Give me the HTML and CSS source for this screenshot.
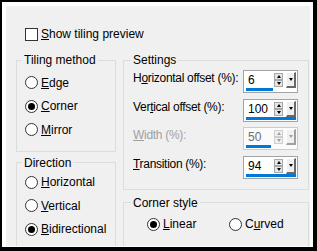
FILE: index.html
```html
<!DOCTYPE html>
<html>
<head>
<meta charset="utf-8">
<link rel="stylesheet" href="styles.css">
</head>
<body>
<div class="frame">
  <div class="dialog">
    <div class="check"><span class="cb"></span><span><u>S</u>how tiling preview</span></div>
    <div class="cols">
      <div class="col left">
        <fieldset class="grp tiling">
          <legend>Tiling method</legend>
          <div class="opts">
            <div class="radio"><span class="rb"></span><span><u>E</u>dge</span></div>
            <div class="radio"><span class="rb on"></span><span><u>C</u>orner</span></div>
            <div class="radio"><span class="rb"></span><span><u>M</u>irror</span></div>
          </div>
        </fieldset>
        <fieldset class="grp direction">
          <legend>Direction</legend>
          <div class="opts">
            <div class="radio"><span class="rb"></span><span><u>H</u>orizontal</span></div>
            <div class="radio"><span class="rb"></span><span><u>V</u>ertical</span></div>
            <div class="radio"><span class="rb on"></span><span><u>B</u>idirectional</span></div>
          </div>
        </fieldset>
      </div>
      <div class="col right">
        <fieldset class="grp settings">
          <legend>Settings</legend>
          <div class="fields">
            <div class="field">
              <span class="lbl">H<u>o</u>rizontal offset (%):</span>
              <div class="num">
                <div class="top"><span class="val">6</span><span class="spin"><span class="sb up"></span><span class="sb dn"></span></span><span class="dd"></span></div>
                <div class="track"><div class="fill" style="width:54%"></div></div>
              </div>
            </div>
            <div class="field">
              <span class="lbl">Ver<u>t</u>ical offset (%):</span>
              <div class="num">
                <div class="top"><span class="val">100</span><span class="spin"><span class="sb up"></span><span class="sb dn"></span></span><span class="dd"></span></div>
                <div class="track"><div class="fill" style="width:100%"></div></div>
              </div>
            </div>
            <div class="field disabled">
              <span class="lbl"><u>W</u>idth (%):</span>
              <div class="num">
                <div class="top"><span class="val">50</span><span class="spin"><span class="sb up"></span><span class="sb dn"></span></span><span class="dd"></span></div>
                <div class="track"><div class="fill" style="width:50%"></div></div>
              </div>
            </div>
            <div class="field">
              <span class="lbl"><u>T</u>ransition (%):</span>
              <div class="num">
                <div class="top"><span class="val">94</span><span class="spin"><span class="sb up"></span><span class="sb dn"></span></span><span class="dd"></span></div>
                <div class="track"><div class="fill" style="width:100%"></div></div>
              </div>
            </div>
          </div>
        </fieldset>
        <fieldset class="grp corner">
          <legend>Corner style</legend>
          <div class="pair">
            <div class="radio first"><span class="rb on"></span><span><u>L</u>inear</span></div>
            <div class="radio"><span class="rb"></span><span>C<u>u</u>rved</span></div>
          </div>
        </fieldset>
      </div>
    </div>
  </div>
</div>
</body>
</html>
```

FILE: styles.css
```css
html, body {
  margin: 0;
  padding: 0;
  background: #000;
}
body {
  font-family: "Liberation Sans", Arial, sans-serif;
  font-size: 12px;
  line-height: 16px;
  color: #000;
}
.frame {
  width: 317px;
  height: 251px;
  box-sizing: border-box;
  border-style: solid;
  border-color: #000;
  border-width: 2px 4px 4px 2px;
}
.dialog {
  height: 100%;
  box-sizing: border-box;
  border-style: solid;
  border-color: #fff;
  border-width: 4px 3px 1px 4px;
  background: #f0f0f0;
  overflow: hidden;
  padding: 20px 0 0 10px;
}
.check {
  display: flex;
  align-items: center;
  height: 16px;
  padding-left: 9px;
  gap: 3px;
}
.cb {
  width: 13px;
  height: 13px;
  box-sizing: border-box;
  border: 1px solid #333;
  background: #fff;
}
.cols {
  display: flex;
  gap: 7px;
  margin-top: 10px;
}
.left { width: 100px; }
.right { width: 186px; }
.grp {
  margin: 0;
  padding: 0;
  border: 1px solid #dcdcdc;
  min-width: 0;
}
.grp legend {
  padding: 0 2px;
  line-height: 16px;
  margin-left: 5px;
}
.settings legend, .corner legend { margin-left: 7px; }
.opts { padding-left: 8px; }
.radio {
  display: flex;
  align-items: center;
  height: 23.5px;
  gap: 3px;
}
.rb {
  width: 13px;
  height: 13px;
  box-sizing: border-box;
  border: 1px solid #333;
  border-radius: 50%;
  background: #fff;
  display: flex;
  align-items: center;
  justify-content: center;
}
.rb.on::after {
  content: "";
  width: 7px;
  height: 7px;
  border-radius: 50%;
  background: #000;
}
.tiling { padding: 3px 0 9px 0; }
.direction { margin-top: 3px; padding: 0 0 20px 0; }
.settings { padding: 2px 0 10.5px 0; }
.fields { padding-left: 9px; }
.corner { margin-top: 4.5px; padding: 2px 0 30px 0; }
.pair { display: flex; padding-left: 23px; }
.pair .first { width: 82px; }
.field {
  display: flex;
  align-items: flex-start;
  height: 23px;
  margin-bottom: 5.5px;
}
.field:last-child { margin-bottom: 0; }
.lbl {
  flex: 0 0 110px;
  white-space: nowrap;
  letter-spacing: -0.3px;
}
.num {
  width: 55px;
  height: 23px;
  box-sizing: border-box;
  border: 1px solid #a3a3a3;
  background: #fff;
  display: flex;
  flex-direction: column;
}
.top {
  display: flex;
  align-items: center;
  height: 17px;
}
.val {
  flex: 1;
  padding: 2px 0 0 4px;
  line-height: 15px;
}
.spin {
  display: flex;
  flex-direction: column;
  margin-right: 3px;
  margin-top: 1px;
}
.sb {
  width: 9px;
  height: 7px;
  box-sizing: border-box;
  border: 1px solid #a8a8a8;
  background: #e6e6e6;
  display: flex;
  align-items: center;
  justify-content: center;
}
.sb.up::after {
  content: "";
  border-left: 2.5px solid transparent;
  border-right: 2.5px solid transparent;
  border-bottom: 3px solid #000;
}
.sb.dn::after {
  content: "";
  border-left: 2.5px solid transparent;
  border-right: 2.5px solid transparent;
  border-top: 3px solid #000;
}
.dd {
  width: 10px;
  height: 16px;
  margin-top: 1px;
  margin-right: 1px;
  box-sizing: border-box;
  background: #f0f0f0;
  border-style: solid;
  border-width: 1px 2px 2px 1px;
  border-color: #fff #696969 #696969 #fff;
  display: flex;
  align-items: center;
  justify-content: center;
}
.dd::after {
  content: "";
  border-left: 2.5px solid transparent;
  border-right: 2.5px solid transparent;
  border-top: 3px solid #000;
}
.track {
  width: 50px;
  height: 3px;
  margin-left: 2px;
}
.fill {
  height: 3px;
  background: #0078d7;
}
.disabled .lbl { color: #a0a0a0; }
.disabled .num { border-color: #cccccc; background: #fbfbfb; }
.disabled .val { color: #6d6d6d; }
.disabled .sb { border-color: #cfcfcf; background: #f0f0f0; }
.disabled .sb.up::after { border-bottom-color: #a0a0a0; }
.disabled .sb.dn::after, .disabled .dd::after { border-top-color: #a0a0a0; }
.disabled .dd { border-color: #fff #a0a0a0 #a0a0a0 #fff; }
```
